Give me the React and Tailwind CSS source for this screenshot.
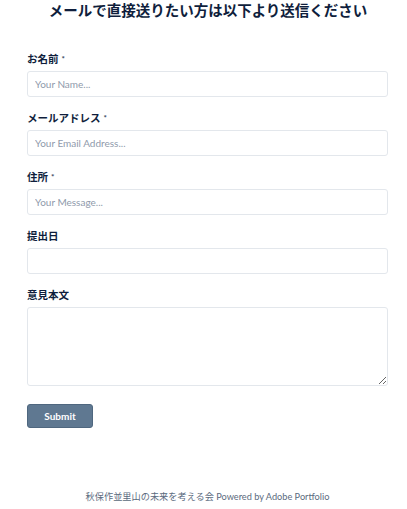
import React from "react";

const labelCls = "block text-[10.5px] font-bold text-[#0f1e3c] mb-[5px] leading-[14px]";
const inputCls = "block w-full h-[26px] border border-[#e3e7ec] rounded-[3px] bg-white px-[7px] text-[10px] text-[#333] placeholder:text-[#8f9aab] outline-none";

function Field({ label, required, placeholder, mt }) {
  return (
    <div className={mt}>
      <label className={labelCls}>
        {label}
        {required && <span className="ml-[3px] text-[8px] align-top text-[#33425c]">*</span>}
      </label>
      <input className={inputCls} placeholder={placeholder} />
    </div>
  );
}

export default function App() {
  return (
    <div
      className="w-[407px] h-[509px] bg-white flex flex-col"
      style={{ fontFamily: "Lato, 'Noto Sans CJK JP', sans-serif" }}
    >
      <h1 className="text-center pl-[9px] text-[14.5px] font-bold text-[#0f1e3c] leading-[21px]">
        メールで直接送りたい方は以下より送信ください
      </h1>
      <form className="px-[27px] pr-[19px] mt-[31px]">
        <Field label="お名前" required placeholder="Your Name..." />
        <Field label="メールアドレス" required placeholder="Your Email Address..." mt="mt-[14px]" />
        <Field label="住所" required placeholder="Your Message..." mt="mt-[14px]" />
        <Field label="提出日" mt="mt-[14px]" />
        <div className="mt-[14px]">
          <label className={labelCls}>意見本文</label>
          <textarea className="block w-full h-[79px] border border-[#e3e7ec] rounded-[3px] bg-white px-[7px] py-[5px] text-[10px] outline-none" />
        </div>
        <button
          type="button"
          className="mt-[18px] w-[66px] h-[24px] rounded-[3px] bg-[#5f7891] border border-[#4f677f] text-white text-[10px] font-bold"
        >
          Submit
        </button>
      </form>
      <div className="mt-auto mb-[5px] pl-[8px] text-center text-[9.2px] text-[#5b6b80]">
        秋保作並里山の未来を考える会 Powered by Adobe Portfolio
      </div>
    </div>
  );
}
